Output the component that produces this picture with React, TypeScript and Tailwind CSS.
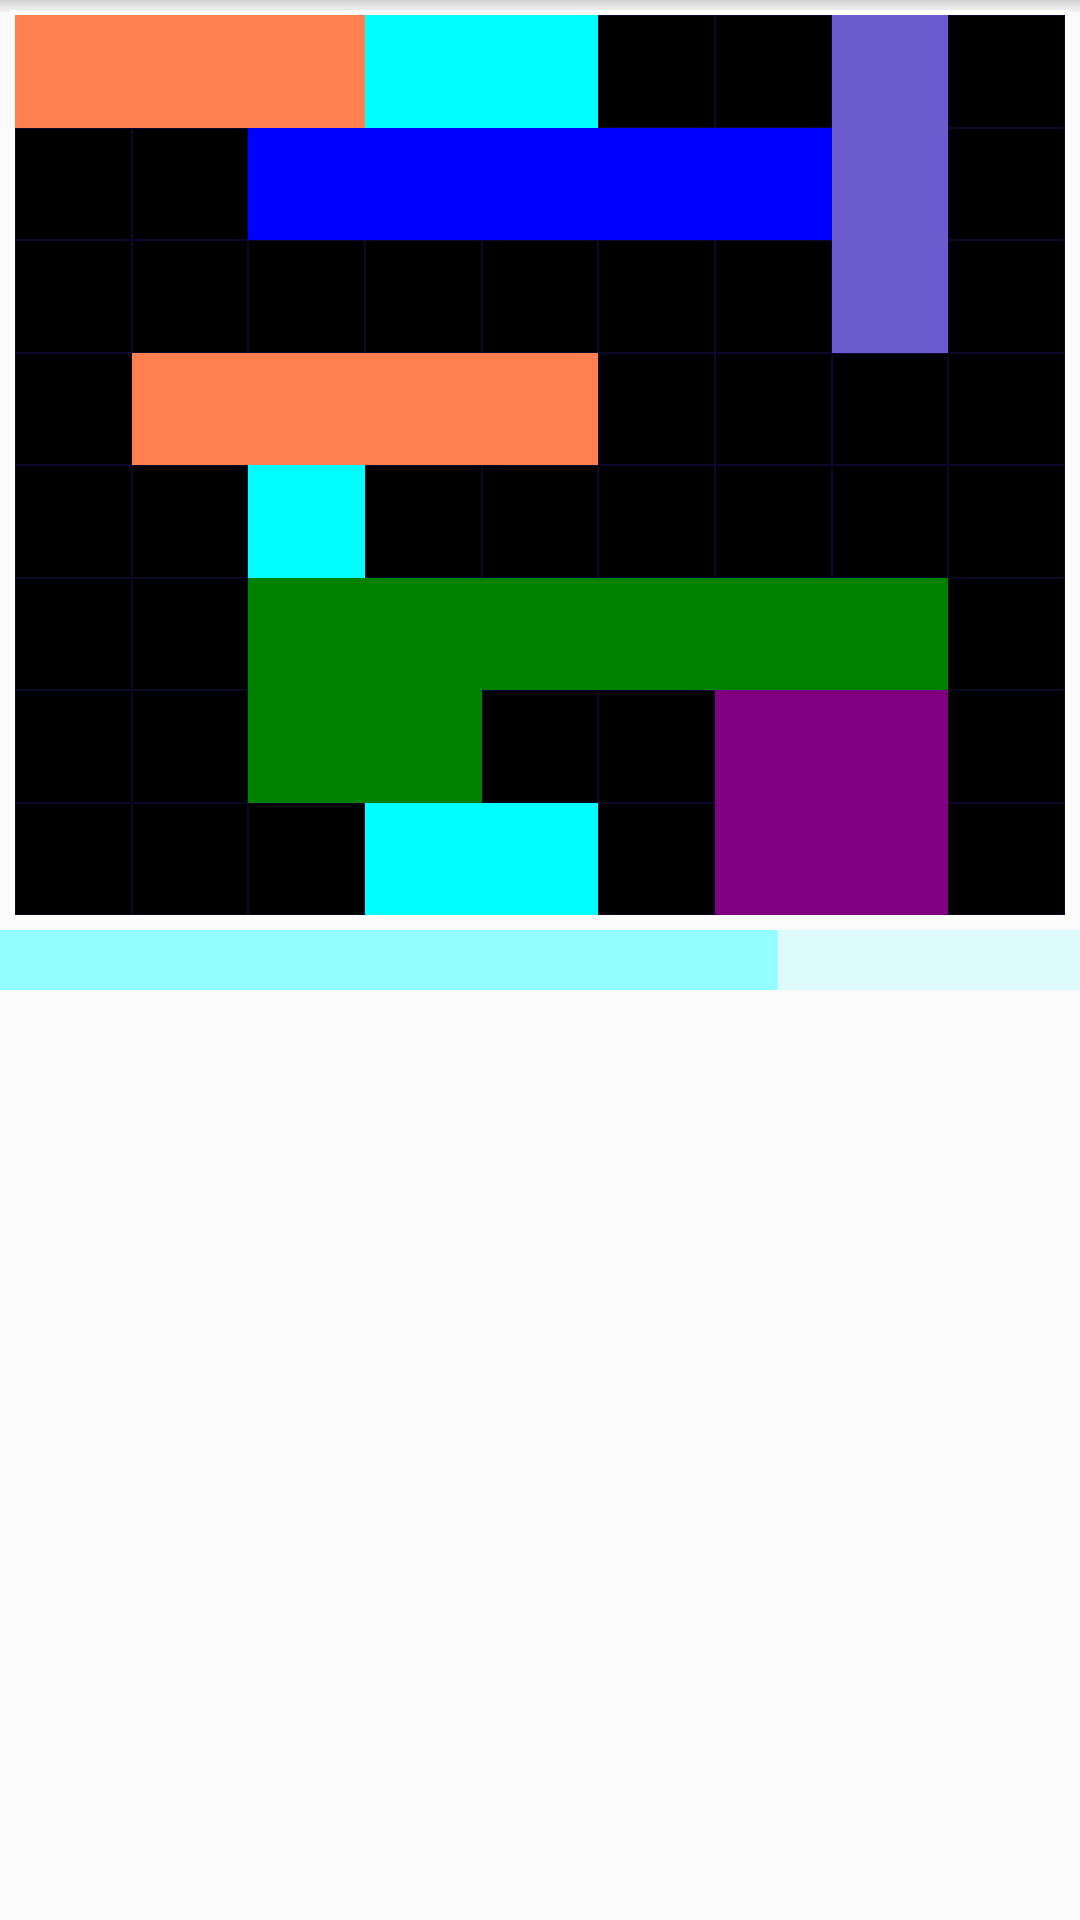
// Sliding-block puzzle board with a progress bar underneath.

type Piece = { color: string; cells: [number, number][] };

const COLS = 9;
const ROWS = 8;

const pieces: Piece[] = [
  { color: "bg-[#ff7f50]", cells: [[0, 0], [0, 1], [0, 2]] },
  { color: "bg-[#00ffff]", cells: [[0, 3], [0, 4]] },
  { color: "bg-[#6a5acd]", cells: [[0, 7], [1, 7], [2, 7]] },
  { color: "bg-[#0000ff]", cells: [[1, 2], [1, 3], [1, 4], [1, 5], [1, 6]] },
  { color: "bg-[#ff7f50]", cells: [[3, 1], [3, 2], [3, 3], [3, 4]] },
  { color: "bg-[#00ffff]", cells: [[4, 2]] },
  {
    color: "bg-[#008000]",
    cells: [[5, 2], [5, 3], [5, 4], [5, 5], [5, 6], [5, 7], [6, 2], [6, 3]],
  },
  { color: "bg-[#800080]", cells: [[6, 6], [6, 7], [7, 6], [7, 7]] },
  { color: "bg-[#00ffff]", cells: [[7, 3], [7, 4]] },
];

const cellColor = (r: number, c: number) =>
  pieces.find((p) => p.cells.some(([pr, pc]) => pr === r && pc === c))?.color;

const Board = () => (
  <div className="relative z-10 mx-[10px] bg-white p-[5px]">
    <div className="grid h-[900px] grid-cols-9 grid-rows-8 bg-black">
      {Array.from({ length: ROWS * COLS }, (_, i) => {
        const r = Math.floor(i / COLS);
        const c = i % COLS;
        const color = cellColor(r, c);
        return (
          <div
            key={i}
            className={color ?? "border border-[#0c0828] bg-black"}
          />
        );
      })}
    </div>
  </div>
);

const Progress = ({ value }: { value: number }) => (
  <div className="mt-[10px] h-[60px] w-full bg-[#dcfafa]">
    <div className="h-full bg-[#94fffe]" style={{ width: `${value}%` }} />
  </div>
);

export default function App() {
  return (
    <div className="relative min-h-screen bg-[#fafafa] pt-[10px]">
      <div className="pointer-events-none absolute inset-x-0 top-0 h-[12px] bg-gradient-to-b from-[#d0d0d0] via-[#e4e4e4] to-[#f4f4f4]" />
      <Board />
      <Progress value={72} />
    </div>
  );
}
